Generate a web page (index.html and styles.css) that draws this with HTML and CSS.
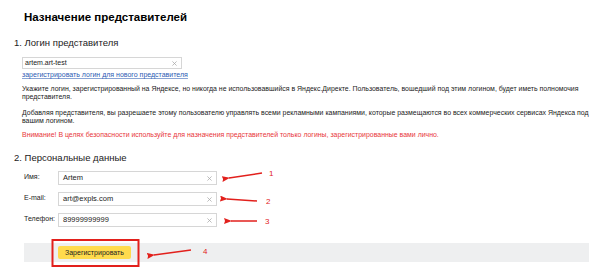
FILE: index.html
```html
<!DOCTYPE html>
<html lang="ru">
<head>
<meta charset="utf-8">
<title>Назначение представителей</title>
<link rel="stylesheet" href="styles.css">
</head>
<body>
<main class="page">
  <h1 class="title">Назначение представителей</h1>

  <section class="section">
    <h2 class="section-title">1. Логин представителя</h2>
    <div class="section-body">
      <div class="input input-login">
        <span class="input-value">artem.art-test</span>
        <svg class="clear" viewBox="0 0 6 6" width="5" height="5"><path d="M0.5 0.5 L5.5 5.5 M5.5 0.5 L0.5 5.5"/></svg>
      </div>
      <a class="link" href="#">зарегистрировать логин для нового представителя</a>
      <p class="note note-first">Укажите логин, зарегистрированный на Яндексе, но никогда не использовавшийся в Яндекс.Директе. Пользователь, вошедший под этим логином, будет иметь полномочия представителя.</p>
      <p class="note">Добавляя представителя, вы разрешаете этому пользователю управлять всеми рекламными кампаниями, которые размещаются во всех коммерческих сервисах Яндекса под вашим логином.</p>
      <p class="note warning">Внимание! В целях безопасности используйте для назначения представителей только логины, зарегистрированные вами лично.</p>
    </div>
  </section>

  <section class="section section-personal">
    <h2 class="section-title">2. Персональные данные</h2>
    <div class="section-body fields">
      <div class="field">
        <span class="field-label">Имя:</span>
        <div class="input input-field">
          <span class="input-value">Artem</span>
          <svg class="clear" viewBox="0 0 6 6" width="5" height="5"><path d="M0.5 0.5 L5.5 5.5 M5.5 0.5 L0.5 5.5"/></svg>
        </div>
      </div>
      <div class="field">
        <span class="field-label">E-mail:</span>
        <div class="input input-field">
          <span class="input-value">art@expls.com</span>
          <svg class="clear" viewBox="0 0 6 6" width="5" height="5"><path d="M0.5 0.5 L5.5 5.5 M5.5 0.5 L0.5 5.5"/></svg>
        </div>
      </div>
      <div class="field">
        <span class="field-label">Телефон:</span>
        <div class="input input-field">
          <span class="input-value">89999999999</span>
          <svg class="clear" viewBox="0 0 6 6" width="5" height="5"><path d="M0.5 0.5 L5.5 5.5 M5.5 0.5 L0.5 5.5"/></svg>
        </div>
      </div>
    </div>
  </section>

  <div class="actions">
    <button class="submit" type="button">Зарегистрировать</button>
  </div>

  <svg class="annotations" viewBox="0 0 604 275" width="604" height="275">
    <defs>
      <marker id="head" viewBox="0 0 8 6" refX="1" refY="3" markerWidth="8" markerHeight="6" markerUnits="userSpaceOnUse" orient="auto-start-reverse">
        <path d="M0 3 L8 0 L7 3 L8 6 Z" class="ann-fill"/>
      </marker>
    </defs>
    <line class="ann-line" x1="262" y1="173" x2="229" y2="178" marker-end="url(#head)"/>
    <line class="ann-line" x1="257" y1="201" x2="227" y2="199" marker-end="url(#head)"/>
    <line class="ann-line" x1="257" y1="221" x2="231" y2="221" marker-end="url(#head)"/>
    <line class="ann-line" x1="191" y1="250" x2="154" y2="255" marker-end="url(#head)"/>
    <rect class="ann-box" x="52.5" y="240" width="86" height="26"/>
    <text class="ann-num" x="269" y="176">1</text>
    <text class="ann-num" x="266" y="204">2</text>
    <text class="ann-num" x="265" y="224">3</text>
    <text class="ann-num" x="203" y="254">4</text>
  </svg>
</main>
</body>
</html>
```
FILE: styles.css
```css
* {
  box-sizing: border-box;
}

html, body {
  margin: 0;
  padding: 0;
  background: #ffffff;
}

body {
  font-family: "Liberation Sans", Arial, sans-serif;
  color: #222;
}

.page {
  position: relative;
  width: 604px;
  height: 275px;
  padding: 10px 8px 0 14px;
  overflow: hidden;
}

.title {
  margin: 0 0 0 10px;
  font-size: 11.5px;
  line-height: 14px;
  font-weight: bold;
  color: #000;
}

.section {
  margin-top: 13px;
}

.section-title {
  margin: 0;
  font-size: 9.5px;
  line-height: 12px;
  font-weight: normal;
  color: #222;
}

.section-body {
  margin-left: 8px;
  display: flex;
  flex-direction: column;
  align-items: flex-start;
}

.input {
  display: flex;
  align-items: center;
  justify-content: space-between;
  border: 1px solid #d6d6d6;
  background: #fff;
  color: #222;
}

.input-login {
  margin-top: 8px;
  width: 160px;
  height: 12px;
  padding: 0 4px 0 2px;
  font-size: 7px;
  line-height: 10px;
}

.input-field {
  width: 159px;
  height: 14px;
  padding: 0 4px 0 4px;
  font-size: 7.5px;
  line-height: 12px;
}

.clear {
  flex: none;
  stroke: #a8a8a8;
  stroke-width: 0.9;
  fill: none;
}

.link {
  margin-top: 1px;
  font-size: 7px;
  line-height: 9px;
  color: #2c5bb3;
  text-decoration: underline;
  text-decoration-color: #8aa4d4;
}

.note {
  margin: 8px 0 0 0;
  font-size: 6.95px;
  line-height: 8px;
  color: #222;
}

.note-first {
  margin-top: 6px;
}

.warning {
  margin-top: 6px;
  color: #e8363a;
}

.section-personal {
  margin-top: 13px;
}

.fields {
  margin-left: 10px;
  margin-top: 7px;
  gap: 7px;
}

.field {
  display: flex;
  align-items: flex-start;
}

.field-label {
  width: 34px;
  padding-top: 2px;
  font-size: 7px;
  line-height: 8px;
  color: #222;
}

.actions {
  margin: 16px 0 0 10px;
  width: 565px;
  height: 19px;
  background: #eeeff0;
  display: flex;
  align-items: center;
  padding-left: 34px;
}

.submit {
  border: none;
  border-radius: 2px;
  background: #ffdb4d;
  height: 13px;
  padding: 0 7px;
  font-family: "Liberation Sans", Arial, sans-serif;
  font-size: 7px;
  line-height: 13px;
  color: #222;
  cursor: pointer;
}

.annotations {
  position: absolute;
  left: 0;
  top: 0;
  pointer-events: none;
}

.ann-line {
  stroke: #e2201c;
  stroke-width: 1.5;
}

.ann-fill {
  fill: #e2201c;
}

.ann-box {
  fill: none;
  stroke: #e2201c;
  stroke-width: 2;
}

.ann-num {
  fill: #e2201c;
  font-family: "Liberation Sans", Arial, sans-serif;
  font-size: 8px;
}
```
